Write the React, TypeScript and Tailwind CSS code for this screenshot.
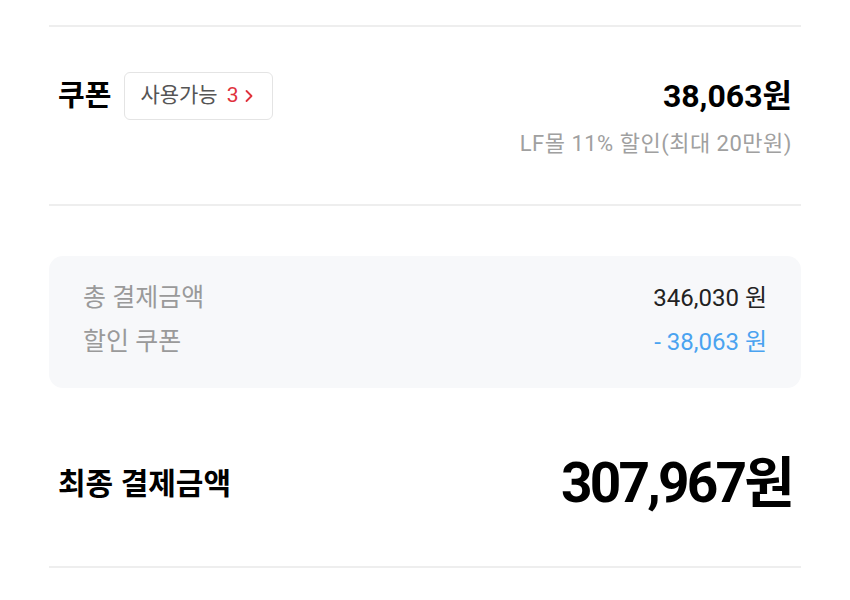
import { ChevronRight } from "lucide-react";

const font = { fontFamily: 'Roboto, "Noto Sans CJK KR", "Noto Sans", sans-serif' };

function Divider() {
  return <div className="h-[2px] w-full bg-[#eeeeee]" />;
}

export default function App() {
  return (
    <div className="h-[600px] w-[850px] bg-white px-[49px] pt-[25px]" style={font}>
      <Divider />

      {/* coupon */}
      <div className="px-[9px] pt-[45px] pb-[46px]">
        <div className="flex items-center justify-between">
          <div className="flex items-center gap-[13px]">
            <span className="text-[29px] font-bold leading-none text-black">쿠폰</span>
            <button className="flex h-[48px] w-[149px] items-center rounded-[6px] border border-[#e4e4e4] pl-[15px] text-[21px] text-[#555]">
              사용가능
              <span className="ml-[9px] text-[#e0323c]">3</span>
              <ChevronRight className="ml-[1px] h-[20px] w-[20px] text-[#e0323c]" strokeWidth={2.2} />
            </button>
          </div>
          <span className="text-[32px] font-bold text-black">38,063원</span>
        </div>
        <div className="mt-[10px] text-right text-[22px] leading-[28px] tracking-[0.5px] text-[#a0a0a0]">
          LF몰 11% 할인(최대 20만원)
        </div>
      </div>

      <Divider />

      {/* summary */}
      <div className="mt-[50px] rounded-[14px] bg-[#f7f8fa] px-[34px] pt-[25px] pb-[29px] text-[24px] leading-[34px]">
        <div className="flex justify-between">
          <span className="text-[25px] text-[#9a9a9a]">총 결제금액</span>
          <span className="text-[#222]">346,030 원</span>
        </div>
        <div className="mt-[10px] flex justify-between">
          <span className="text-[25px] text-[#9a9a9a]">할인 쿠폰</span>
          <span className="text-[#4aa3f0]">- 38,063 원</span>
        </div>
      </div>

      {/* total */}
      <div className="flex h-[178px] items-center justify-between px-[9px] pt-[12px]">
        <span className="text-[30px] font-bold text-black">최종 결제금액</span>
        <span className="text-[55px] font-bold leading-none tracking-[-2.8px] text-black">307,967원</span>
      </div>

      <Divider />
    </div>
  );
}
